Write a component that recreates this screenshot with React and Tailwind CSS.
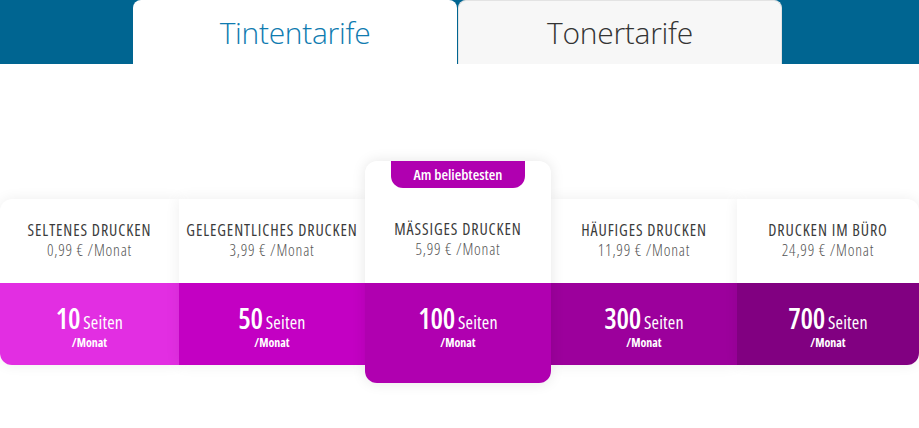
const plans = [
  { name: "SELTENES DRUCKEN", price: "0,99 €", pages: "10", bg: "bg-[#e22ee2]", w: "w-[179px]" },
  { name: "GELEGENTLICHES DRUCKEN", price: "3,99 €", pages: "50", bg: "bg-[#c300c3]", w: "w-[186px]" },
  { name: "MÄSSIGES DRUCKEN", price: "5,99 €", pages: "100", bg: "bg-[#b000b0]", w: "w-[186px]", popular: true },
  { name: "HÄUFIGES DRUCKEN", price: "11,99 €", pages: "300", bg: "bg-[#9c009c]", w: "w-[186px]" },
  { name: "DRUCKEN IM BÜRO", price: "24,99 €", pages: "700", bg: "bg-[#810081]", w: "w-[182px]" },
];

function Pages({ pages }) {
  return (
    <div className="flex flex-col items-center text-white">
      <div className="flex items-baseline gap-[3px]">
        <span className="text-[28px] font-semibold leading-none tracking-[-0.3px]">{pages}</span>
        <span className="text-[18px] font-medium leading-none tracking-[0.2px]">Seiten</span>
      </div>
      <span className="mt-[5px] text-[12px] font-bold leading-none">/Monat</span>
    </div>
  );
}

function Head({ plan }) {
  return (
    <div className="flex flex-col items-center gap-[1px] text-center">
      <span className="text-[16px] leading-[19px] tracking-[0.9px] text-[#3b3b3b] whitespace-nowrap">{plan.name}</span>
      <span className="text-[16px] font-light leading-[19px] tracking-[0.8px] text-[#555]">{plan.price} /Monat</span>
    </div>
  );
}

export default function App() {
  return (
    <div className="w-[919px] h-[428px] bg-white overflow-hidden font-['Open_Sans',sans-serif] font-stretch-condensed">
      {/* Tabs */}
      <div className="h-[64px] bg-[#006591] flex pl-[133px]">
        <div className="w-[324px] h-full bg-white rounded-t-[8px] flex items-center justify-center">
          <span className="text-[30px] font-light font-stretch-normal text-[#0f7bb0] tracking-[-0.3px]">Tintentarife</span>
        </div>
        <div className="ml-[1px] w-[324px] h-full bg-[#f7f7f7] border border-b-0 border-[#e3e3e3] rounded-t-[8px] flex items-center justify-center">
          <span className="text-[30px] font-light font-stretch-normal text-[#333] tracking-[-0.3px]">Tonertarife</span>
        </div>
      </div>

      {/* Plans */}
      <div className="flex items-start pt-[97px]">
        {plans.map((p, i) =>
          p.popular ? (
            <div
              key={p.name}
              className={`relative z-10 ${p.w} shrink-0 h-[222px] flex flex-col rounded-[12px] bg-white shadow-[0_0_14px_rgba(0,0,0,0.10)] overflow-hidden`}
            >
              <div className="flex justify-center">
                <div className="w-[134px] h-[27px] bg-[#b000b0] rounded-b-[12px] flex items-center justify-center text-white text-[15px] font-semibold">
                  Am beliebtesten
                </div>
              </div>
              <div className="h-[95px] pt-[32px]">
                <Head plan={p} />
              </div>
              <div className={`flex-1 ${p.bg} pt-[21px]`}>
                <Pages pages={p.pages} />
              </div>
            </div>
          ) : (
            <div
              key={p.name}
              className={`mt-[38px] ${p.w} shrink-0 h-[166px] flex flex-col bg-white shadow-[0_0_14px_rgba(0,0,0,0.07)] overflow-hidden ${
                i === 0 ? "rounded-l-[12px]" : ""
              } ${i === plans.length - 1 ? "rounded-r-[12px]" : ""}`}
            >
              <div className="h-[84px] pt-[22px]">
                <Head plan={p} />
              </div>
              <div className={`flex-1 ${p.bg} pt-[21px]`}>
                <Pages pages={p.pages} />
              </div>
            </div>
          )
        )}
      </div>
    </div>
  );
}
